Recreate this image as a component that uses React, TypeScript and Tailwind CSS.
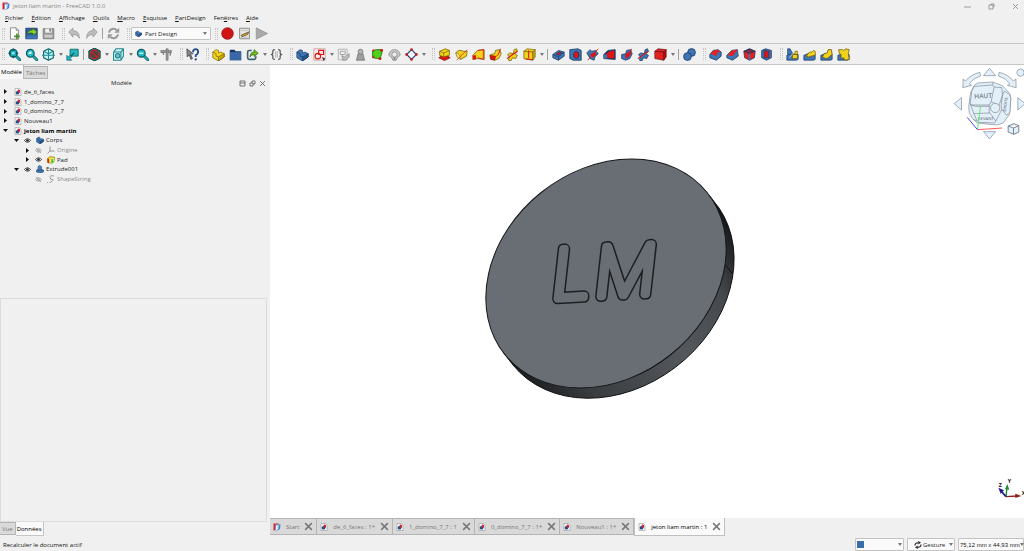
import type { ReactNode } from 'react'

const TEAL = '#22b8c0'
const TEAL_DARK = '#0c5c63'
const YEL = '#f2d21c'
const YEL_DARK = '#6d5a00'
const BLUE = '#3f74b5'
const BLUE_DARK = '#16375f'
const RED = '#dc1616'

const cube = (fill: string, side: string, line: string) => (
  <g stroke={line} strokeWidth="0.8" strokeLinejoin="round">
    <path d="M1 4l4-3 10 1-3 3z" fill={fill} />
    <path d="M1 4l11 1v10L1 13z" fill={fill} />
    <path d="M15 2v9l-3 4V5z" fill={side} />
  </g>
)

const bracket = (fill: string, side: string, line: string) => (
  <g stroke={line} strokeWidth="0.8" strokeLinejoin="round">
    <path d="M1 5l4-3 3 1v3l3-1 4 2v4l-7 5-7-4z" fill={fill} />
    <path d="M15 7v4l-7 5v-5z" fill={side} />
    <path d="M1 5l4 2v3l3 1" fill="none" />
  </g>
)

const magnifier = (
  <>
    <path d="M9 9l5.500 5.500" stroke={TEAL_DARK} strokeWidth="3.600" strokeLinecap="round" />
    <path d="M9 9l5.500 5.500" stroke={TEAL} strokeWidth="1.800" strokeLinecap="round" />
    <circle cx="6.500" cy="6.500" r="4.800" fill={TEAL} stroke={TEAL_DARK} strokeWidth="1.400" />
  </>
)

const sweep = (fill: string, line: string) => (
  <>
    <path d="M2 8l5-1 1-4 5-1 2 5-3 6-5 2-5-2z" fill={fill} stroke={line} strokeWidth="0.9" />
    <path d="M1 9l7 1-1 5-5-1z" fill={RED} stroke="#700" strokeWidth="0.6" />
    <path d="M6 12Q12 10 14 1" fill="none" stroke={RED} strokeWidth="1.200" />
  </>
)

const helix = (fill: string, line: string) => (
  <>
    <path d="M3 15l1-4-2-3 3-2 4 1 1-5 3-1 1 3-3 3 3 2-2 4-4-1-2 4z" fill={fill} stroke={line} strokeWidth="0.9" />
    <path d="M1 13L14 4" stroke={RED} strokeWidth="1.300" />
  </>
)

const bool = (extra: ReactNode) => (
  <>
    <path d="M1 9l5-2 9 1v6l-2 1H1z" fill={BLUE} stroke={BLUE_DARK} strokeWidth="0.8" />
    {extra}
  </>
)

const icons = {
  newDoc: (
    <>
      <path d="M3 1h7l3 3v11H3z" fill="#fff" stroke="#777" />
      <path d="M10 1v3h3" fill="#ddd" stroke="#777" />
      <path d="M11 8v7M7.500 11.500h7" stroke="#4b8a2b" strokeWidth="2" />
    </>
  ),
  open: (
    <>
      <path d="M1 1.500h14v13H1z" fill="#2d5f9e" stroke={BLUE_DARK} />
      <path d="M3 9Q4 3 9 4V1.500L15 6l-5 4.500V8Q6 6 3 9z" fill="#8bd12a" stroke="#265e0a" strokeWidth="0.7" />
      <path d="M1 14.500l2-4h12v4z" fill={BLUE} />
    </>
  ),
  save: (
    <>
      <path d="M1.500 2h13v12.500h-13z" fill="#999" stroke="#777" />
      <path d="M4 2h8v5H4z" fill="#eee" />
      <path d="M9 2.500h2v3H9z" fill="#777" />
      <path d="M3 9.500h10V13H3z" fill="#ccc" />
    </>
  ),
  undo: <path d="M1 6l5-4.500v3Q14 4 14 14q-2-5-8-4.500v3z" fill="#bdbdbd" stroke="#8c8c8c" strokeWidth="0.8" />,
  redo: <path d="M15 6l-5-4.500v3Q2 4 2 14q2-5 8-4.500v3z" fill="#bdbdbd" stroke="#8c8c8c" strokeWidth="0.8" />,
  refresh: (
    <g fill="none" stroke="#999" strokeWidth="2.400">
      <path d="M2.500 7A5.500 5.500 0 0 1 12 4" />
      <path d="M13.500 9A5.500 5.500 0 0 1 4 12" />
      <path d="M15 1v6H9zM1 15V9h6z" fill="#999" stroke="none" />
    </g>
  ),
  record: <circle cx="8" cy="8" r="7.200" fill="#d01414" stroke="#8c0a0a" strokeWidth="0.8" />,
  editMacro: (
    <>
      <path d="M2 1.500h12v13H2z" fill="#e4e6df" stroke="#777" />
      <path d="M4 4h8M4 12.500h8" stroke="#bbb" />
      <path d="M4 10l7-3 2-1-1 3-7 3z" fill="#e6a817" stroke="#333" strokeWidth="0.8" />
    </>
  ),
  play: <path d="M1.500 1l14 7-14 7z" fill="#a9a9a9" stroke="#8a8a8a" strokeWidth="0.8" />,
  fitAll: (
    <>
      {magnifier}
      <path d="M6.500 0l2.500 3.500H4zM6.500 13L9 9.500H4zM0 6.500L3.500 4v5zM13 6.500L9.500 4v5z" fill={TEAL_DARK} />
      <path d="M5 6.500h3" stroke="#baf3f5" strokeWidth="2" />
    </>
  ),
  fitSel: (
    <>
      {magnifier}
      <path d="M4 8l1-3 3-1v3z" fill="#d9fbfc" />
    </>
  ),
  iso: (
    <g fill="#c9f3f4" stroke={TEAL_DARK} strokeWidth="1.300" strokeLinejoin="round">
      <path d="M8 1l6 3v8l-6 3-6-3V4z" />
      <path d="M2 4l6 3 6-3M8 1v14M0 9h16" fill="none" stroke="#168c94" />
    </g>
  ),
  align: (
    <>
      <path d="M5 1.500h10V10H5z" fill={TEAL} stroke={TEAL_DARK} />
      <path d="M3 13l7-7" stroke={TEAL_DARK} strokeWidth="1.600" />
      <path d="M1 9v6h6l-2-2 2-2-2-2-2 2z" fill={TEAL} stroke={TEAL_DARK} strokeWidth="0.8" />
    </>
  ),
  drawStyle: (
    <>
      <path d="M8 0l7 3.500v9L8 16l-7-3.500v-9z" fill="#1c7c82" stroke="#063236" />
      <circle cx="8" cy="8" r="5.200" fill="#3e4a4c" stroke="#c4201c" strokeWidth="2" />
      <path d="M4 4l8 8" stroke="#c4201c" strokeWidth="2" />
    </>
  ),
  bbox: (
    <g fill="none" stroke="#17868d" strokeWidth="1.300" strokeLinejoin="round">
      <path d="M2 5h9v10H2zM2 5l3-4h9v9l-3 5M11 5l3-4" fill="#d9f5f5" />
      <circle cx="7" cy="9.500" r="2.800" fill="#7bc" />
    </g>
  ),
  zoom: (
    <>
      {magnifier}
      <path d="M4 6.500h5" stroke="#d9fbfc" strokeWidth="1.600" />
    </>
  ),
  measure: (
    <g fill="#999" stroke="#666" strokeWidth="0.7">
      <path d="M1 3h13v2.500H1z" />
      <path d="M7.500 1h2.500v14H7.500zM3 5.500h1.500v3zM12 5.500h1.500l-1 4z" />
    </g>
  ),
  whatsThis: (
    <>
      <path d="M1 1l8 6-3.500.5L8 13l-2 1-2-5.500L1.500 11z" fill="#888" stroke="#333" strokeWidth="0.8" />
      <path d="M8.500 5Q9 1.500 12 1.500T15 5q0 2-3 4v2" fill="none" stroke="#224a86" strokeWidth="2.200" />
      <circle cx="12" cy="14" r="1.400" fill="#224a86" />
    </>
  ),
  part: bracket(YEL, '#c9a800', YEL_DARK),
  group: (
    <>
      <path d="M1 2h6l1 2h7v11H1z" fill={BLUE_DARK} />
      <path d="M1 5h14v10H1z" fill="#3868a8" />
    </>
  ),
  link: (
    <>
      <path d="M7 3H4Q2 3 2 5v7q0 2 2 2h6q2 0 2-2v-2" fill="none" stroke="#3e6172" strokeWidth="2" />
      <path d="M5 11Q5 5 10 5V2l5 4.500-5 4V8Q7 8 5 11z" fill="#6fc022" stroke="#264f0a" strokeWidth="0.8" />
    </>
  ),
  braces: (
    <g fill="none" stroke="#555" strokeWidth="1.500">
      <path d="M6 2Q3 2 3.500 5T1 8q3 0 2.500 3T6 14M10 2q3 0 2.500 3T15 8q-3 0-2.500 3T10 14" />
      <path d="M7 4v8M9 4v8" stroke="#888" strokeWidth="0.7" />
    </g>
  ),
  body: bracket(BLUE, '#28548d', BLUE_DARK),
  sketch: (
    <>
      <path d="M1 1h14v14H1z" fill="#f6eaea" stroke="#c99" />
      <path d="M7 3h6v5H7z" fill="none" stroke={RED} strokeWidth="1.400" />
      <circle cx="6" cy="10" r="3.400" fill="none" stroke={RED} strokeWidth="1.400" />
      <path d="M11 11l4 2-2 3z" fill="#333" />
    </>
  ),
  editSketch: (
    <>
      <path d="M1.500 1.500h11v13h-11z" fill="#ededed" stroke="#aaa" />
      <path d="M4 4h6v4H4z" fill="none" stroke="#999" />
      <path d="M6 9l3 2 6-4v4l-4 4H7z" fill="#bbb" stroke="#888" strokeWidth="0.8" />
    </>
  ),
  mapSketch: (
    <>
      <path d="M3 15l2-8h6l2 8z" fill="#9d9d9d" stroke="#777" />
      <circle cx="8" cy="4.500" r="3" fill="#b5b5b5" stroke="#777" />
    </>
  ),
  validate: (
    <>
      <path d="M2 3l5-1 7 0-1 6-1 2 0 4-4-1-6-1z" fill="#4ed01c" stroke="#1c6406" />
      <circle cx="13" cy="3" r="1.700" fill={RED} />
      <circle cx="3" cy="3" r="1.200" fill={RED} />
      <circle cx="11" cy="13" r="1.700" fill={RED} />
      <circle cx="3" cy="11" r="1.200" fill={RED} />
    </>
  ),
  checkGeo: (
    <>
      <path d="M1 9a7 7 0 1 1 14 0l-3 2-2 4H6l-2-4z" fill="#c9c9c9" stroke="#8a8a8a" />
      <circle cx="8" cy="8" r="3.200" fill="#eee" stroke="#8a8a8a" />
      <path d="M7 11h2v4H7z" fill="#888" />
    </>
  ),
  shapeBinder: (
    <>
      <path d="M8 2l6 6-6 6-6-6z" fill="#f4f6ff" stroke="#27467c" strokeWidth="1.500" />
      {[[8, 2], [14, 8], [8, 14], [2, 8]].map(([x, y]) => (
        <circle key={`${x}-${y}`} cx={x} cy={y} r="1.700" fill="#c3202a" />
      ))}
    </>
  ),
  pad: (
    <>
      <path d="M1 12l4-3h6l4 3-7 3.500z" fill={RED} stroke="#700" strokeWidth="0.8" />
      <path d="M2 4l7-3 5 2v6l-7 2-5-2z" fill={YEL} stroke={YEL_DARK} strokeWidth="0.9" />
      <path d="M2 4l5 2 7-3M7 6v5" fill="none" stroke={YEL_DARK} strokeWidth="0.8" />
    </>
  ),
  revolution: (
    <>
      <path d="M1 6Q5 1 10 4l5 0-1 6-7 4Q2 12 1 6z" fill={YEL} stroke={YEL_DARK} strokeWidth="0.9" />
      <path d="M1 6q5 0 6 8-5-1-6-8z" fill="#f8e66a" stroke={YEL_DARK} strokeWidth="0.6" />
      <path d="M2 15L15 2" stroke={RED} strokeWidth="0.9" />
    </>
  ),
  loft: (
    <>
      <path d="M1 9l6-6 8-1v12l-8-1-6 1z" fill={YEL} stroke={YEL_DARK} strokeWidth="0.9" />
      <path d="M7 3l7-1v12l-7-2" fill="none" stroke={RED} strokeWidth="1" />
      <path d="M1 9l4 0v5l-4 0z" fill={RED} />
    </>
  ),
  pipe: sweep(YEL, YEL_DARK),
  helix: helix(YEL, YEL_DARK),
  primitive: (
    <>
      {cube(YEL, '#c9a800', YEL_DARK)}
      <path d="M7 3v10M3 13.500l9 1" stroke={RED} strokeWidth="1.300" />
    </>
  ),
  pocket: (
    <>
      <path d="M1 8l7-5 7 2v5l-7 5-7-3z" fill={BLUE} stroke={BLUE_DARK} strokeWidth="0.9" />
      <path d="M5 7.500l4-2.500 3 1-4 3z" fill={RED} stroke={BLUE_DARK} strokeWidth="0.8" />
      <path d="M1 8l7 3v4M8 11l7-6" fill="none" stroke={BLUE_DARK} strokeWidth="0.8" />
    </>
  ),
  hole: (
    <>
      <path d="M1 2l10-1 4 2v12H5l-4-2z" fill={BLUE} stroke={BLUE_DARK} />
      <ellipse cx="9" cy="8.500" rx="3.400" ry="4.200" fill={RED} stroke={BLUE_DARK} />
    </>
  ),
  groove: (
    <>
      <path d="M1 6l4-4 2 2 5-1 3 4-4 4-1 4-5-2z" fill={BLUE} stroke={BLUE_DARK} strokeWidth="0.9" />
      <path d="M5 8l6-3 2 3-5 4z" fill={RED} />
      <path d="M2 15L15 1" stroke={RED} strokeWidth="1.100" />
    </>
  ),
  subLoft: (
    <>
      <path d="M1 8l5-5 9-1v12L1 13z" fill={BLUE_DARK} stroke={BLUE_DARK} />
      <path d="M4 7l4-3 6-1v10L4 12z" fill={RED} />
      <path d="M1 8l4 0v5l-4 0z" fill={BLUE} />
    </>
  ),
  subPipe: (
    <>
      <path d="M2 8l5-1 1-4 5-1 2 5-3 6-5 2-5-2z" fill={BLUE} stroke={BLUE_DARK} strokeWidth="0.9" />
      <path d="M6 9l5-5 3 3-5 6z" fill={RED} />
      <path d="M6 12Q12 10 14 1" fill="none" stroke={RED} strokeWidth="1.200" />
    </>
  ),
  subHelix: helix(BLUE, BLUE_DARK),
  subPrimitive: cube('#e52020', '#b80d0d', '#5c0b12'),
  boolean: (
    <g fill={BLUE} stroke={BLUE_DARK} strokeWidth="0.9">
      <circle cx="10.500" cy="5.500" r="4.800" />
      <circle cx="5.500" cy="10.500" r="4.800" />
    </g>
  ),
  fillet: (
    <>
      <path d="M1 8l4-5 6-1 4 3v5l-6 5-8-3z" fill={BLUE} stroke={BLUE_DARK} strokeWidth="0.9" />
      <path d="M2 7l4-4 5-1 3 3q-5 0-5 5z" fill="#e52020" />
    </>
  ),
  chamfer: (
    <>
      <path d="M1 9l6-6 7-1 1 8-7 5-7-3z" fill={BLUE} stroke={BLUE_DARK} strokeWidth="0.9" />
      <path d="M2 9l5-6 7-1-6 8z" fill="#e52020" />
    </>
  ),
  draft: (
    <>
      <path d="M1 4l7-3 7 3-1 8-6 3-6-3z" fill="#e52020" stroke={BLUE_DARK} strokeWidth="0.9" />
      <path d="M1 4l7-3 7 3-7 3z" fill="#7a2b45" stroke={BLUE_DARK} strokeWidth="0.8" />
      <path d="M8 7v8" stroke={BLUE} strokeWidth="2" />
    </>
  ),
  thickness: (
    <>
      <path d="M2 3l5-2 7 2v9l-6 3-6-3z" fill={BLUE} stroke={BLUE_DARK} strokeWidth="0.9" />
      <path d="M5 3l6 1v8H5z" fill={RED} stroke={BLUE_DARK} strokeWidth="0.8" />
    </>
  ),
  mirrored: bool(
    <>
      <path d="M2 1h3l4 7H2z" fill={BLUE} stroke={BLUE_DARK} strokeWidth="0.8" />
      <path d="M8 8h6v5H8zM11 4h3v4h-3z" fill={YEL} stroke={YEL_DARK} strokeWidth="0.8" />
      <path d="M4 12l6-7" stroke="#ddd" />
    </>,
  ),
  linear: bool(<path d="M4 10l4-5 3 0 2-2 2 1v5l-5 1-3 1z" fill={YEL} stroke={YEL_DARK} strokeWidth="0.9" />),
  polar: bool(
    <path d="M3 11l2-4 4-1 1-4 4 0 1 6-3 2-1 2-4 1-2-1z" fill={YEL} stroke={YEL_DARK} strokeWidth="1" />,
  ),
  multi: bool(
    <path d="M2 2h5l1 1 3-2 4 1-1 5 1 7-5 1-2-3-3 1V8L3 7z" fill={YEL} stroke={YEL_DARK} strokeWidth="0.9" />,
  ),
  app: (
    <>
      <path d="M1 1h10l2 2H5v10l-2 2H1z" fill="#e4212b" />
      <path d="M5 3h10l-1 9-5 3H5z" fill="#3b86d8" />
      <path d="M6 5h6v2H9v2h2v2H9v3H6z" fill="#fff" />
    </>
  ),
  doc: (
    <>
      <path d="M2 1h9l3 3v11H2z" fill="#f4f4f4" stroke="#888" />
      <circle cx="7" cy="9.500" r="3.700" fill="#25508e" />
      <path d="M8 3l4 1v5l-2 1-3-4z" fill="#cf2630" />
    </>
  ),
  eye: (
    <>
      <path d="M1 8q7-8 14 0-7 8-14 0z" fill="#fff" stroke="#222" strokeWidth="1.800" />
      <circle cx="8" cy="8" r="3" fill="#222" />
    </>
  ),
  eyeOff: (
    <g stroke="#999" fill="none" strokeWidth="1.600">
      <path d="M1 8q7-8 14 0-7 8-14 0zM2 2l12 12" />
      <circle cx="8" cy="8" r="2.500" />
    </g>
  ),
  origin: <path d="M6 1v9l9 0M6 10l-5 5" fill="none" stroke="#888" strokeWidth="1.700" />,
  padItem: (
    <>
      <path d="M1 5l5-4 9 1v9l-6 4-8-2z" fill={YEL} stroke={YEL_DARK} strokeWidth="0.9" />
      <path d="M1 5l3 1v8l-3-1z" fill={RED} />
      <path d="M8 5h5v5h3l-5 6-5-6h2z" fill="#58c322" stroke="#fff" />
    </>
  ),
  extrude: (
    <>
      <path d="M1 10l5-2 9 2v4l-6 2-8-2z" fill={BLUE} stroke={BLUE_DARK} />
      <path d="M4 3l3-2 4 2v7H4z" fill="#4b83c4" stroke={BLUE_DARK} />
    </>
  ),
  shapeString: <path d="M14 2Q5 0 6 5t5 4-3 5-7 0" fill="none" stroke="#999" strokeWidth="2" />,
  close: <path d="M2 2l12 12M14 2L2 14" stroke="#777" strokeWidth="2.600" />,
  orbit: (
    <g fill="none" stroke="#2b2b2b" strokeWidth="2.400">
      <path d="M2 9Q2 3 9 4M14 7q0 6-7 5" />
      <path d="M8 0l6 3-5 4zM8 16l-6-3 5-4z" fill="#2b2b2b" stroke="none" />
    </g>
  ),
}

type IconName = keyof typeof icons

function Icon({ name, className = 'size-[13px]' }: { name: IconName; className?: string }) {
  return (
    <svg viewBox="0 0 16 16" className={`shrink-0 ${className}`} aria-hidden="true">
      {icons[name]}
    </svg>
  )
}

function Tool({ name, menu }: { name: IconName; menu?: boolean }) {
  return (
    <>
      <button type="button" aria-label={name} className="flex w-[17px] shrink-0 justify-center">
        <Icon name={name} />
      </button>
      {menu && (
        <button type="button" aria-label={`${name} menu`} className="flex w-[7px] shrink-0 justify-center">
          <Caret />
        </button>
      )}
    </>
  )
}

function Caret() {
  return (
    <svg viewBox="0 0 4 3" className="h-[3px] w-1 shrink-0" aria-hidden="true">
      <path d="M0 0h4L2 3z" fill="#777" />
    </svg>
  )
}

function Grip() {
  return <div className="mr-px ml-[5px] h-3 w-[3px] shrink-0 border-x border-dotted border-[#c4c4c4] first:ml-[2px]" />
}

function Sep() {
  return <div className="mx-[2px] h-[11px] w-px shrink-0 bg-[#a0a0a0]" />
}

// '|' separator, ':' toolbar handle, '+' suffix for a drop-down
const mainTools =
  ': fitAll fitSel iso+ align | drawStyle+ bbox+ zoom+ measure : whatsThis : part group link+ braces : body sketch+ editSketch mapSketch validate checkGeo shapeBinder+ : pad revolution loft pipe helix primitive+ | pocket hole groove subLoft subPipe subHelix subPrimitive+ | boolean : fillet chamfer draft thickness : mirrored linear polar multi'

const fileTools = ': newDoc open save : undo redo | refresh'
const macroTools = ': record editMacro play'

function Tools({ list }: { list: string }) {
  return list.split(' ').map((t, i) => {
    if (t === ':') return <Grip key={i} />
    if (t === '|') return <Sep key={i} />
    return <Tool key={i} name={t.replace('+', '') as IconName} menu={t.endsWith('+')} />
  })
}

const menus = [
  ['', 'F', 'ichier'],
  ['', 'É', 'dition'],
  ['', 'A', 'ffichage'],
  ['', 'O', 'utils'],
  ['', 'M', 'acro'],
  ['', 'E', 'squisse'],
  ['', 'P', 'artDesign'],
  ['Fen', 'ê', 'tres'],
  ['', 'A', 'ide'],
]

type Node = { label: string; icon: IconName; level: 0 | 1 | 2; open?: boolean; leaf?: boolean; hidden?: boolean }

const tree: Node[] = [
  { label: 'de_6_faces', icon: 'doc', level: 0 },
  { label: '1_domino_7_7', icon: 'doc', level: 0 },
  { label: '0_domino_7_7', icon: 'doc', level: 0 },
  { label: 'Nouveau1', icon: 'doc', level: 0 },
  { label: 'jeton liam martin', icon: 'doc', level: 0, open: true },
  { label: 'Corps', icon: 'body', level: 1, open: true },
  { label: 'Origine', icon: 'origin', level: 2, hidden: true },
  { label: 'Pad', icon: 'padItem', level: 2 },
  { label: 'Extrude001', icon: 'extrude', level: 1, open: true },
  { label: 'ShapeString', icon: 'shapeString', level: 2, leaf: true, hidden: true },
]

const indent = { 0: 'pl-0', 1: 'pl-[11px]', 2: 'pl-[22px]' }

function TreeRow({ node }: { node: Node }) {
  return (
    <li className={`flex items-center ${indent[node.level]} ${node.hidden ? 'text-[#8c8c8c]' : ''}`}>
      <span className="flex w-[11px] justify-center">
        {!node.leaf && (
          <svg viewBox="0 0 5 5" className="size-[5px]" aria-hidden="true">
            <path d={node.open ? 'M0 1h5L2.500 4z' : 'M1 0v5L4 2.500z'} fill="#111" />
          </svg>
        )}
      </span>
      {node.level > 0 && (
        <span className="flex w-[11px] justify-center">
          <Icon name={node.hidden ? 'eyeOff' : 'eye'} className="size-[7px]" />
        </span>
      )}
      <span className="flex w-[13px] justify-center">
        <Icon name={node.icon} className="size-2" />
      </span>
      <span className={node.level === 0 && node.open ? 'font-bold text-black' : ''}>{node.label}</span>
    </li>
  )
}

const docs = ['Start', 'de_6_faces : 1*', '1_domino_7_7 : 1', '0_domino_7_7 : 1*', 'Nouveau1 : 1*', 'jeton liam martin : 1']

function Coin() {
  const face = { rx: 129.6, ry: 103.8 }
  const letters = { x: '0 43', y: '0 0', fontSize: 68 }
  return (
    <svg viewBox="0 0 754 453" preserveAspectRatio="xMidYMid meet" className="size-full" role="img" aria-label="jeton">
      <defs>
        <linearGradient id="rim" gradientUnits="userSpaceOnUse" x1="240" y1="300" x2="447" y2="138">
          <stop offset="0" stopColor="#1a1c1e" />
          <stop offset="0.180" stopColor="#3a3d40" />
          <stop offset="0.550" stopColor="#54585c" />
          <stop offset="0.800" stopColor="#45484c" />
          <stop offset="1" stopColor="#131415" />
        </linearGradient>
      </defs>
      <path
        d="M439 130L449 143A129.600 103.800 -38.700 0 1 243 300L233 287z"
        fill="url(#rim)"
        stroke="#111"
        strokeWidth="1"
      />
      <ellipse cx="336" cy="208.500" {...face} transform="rotate(-38.700 336 208.500)" fill="#696e75" stroke="#141517" />
      <path d="M455.500 200l7 9" stroke="#111" />
      <g
        transform="translate(283 234) rotate(-3)"
        fontFamily="Inter, Open Sans, sans-serif"
        fontStyle="italic"
        fontWeight="100"
        strokeLinejoin="round"
      >
        <text {...letters} fill="#1b1d1f" stroke="#1b1d1f" strokeWidth="11">LM</text>
        <text {...letters} fill="#696e75" stroke="#696e75" strokeWidth="8" aria-hidden="true">LM</text>
      </g>
    </svg>
  )
}

function NavCube() {
  return (
    <svg viewBox="10 8 212 222" className="absolute top-[2px] right-0 h-[74px] w-[71px]" aria-hidden="true">
      <g fill="#e3f0fa" stroke="#7d8894" strokeWidth="2" strokeLinejoin="round">
        <path d="M119 12l18 22h-36zM119 224l18-22h-36zM13 118l22-18v37zM226 118l-22-18v37z" />
        <path d="M90 24Q64 30 47 50l-7-6-1 26 26-7-7-5q12-17 34-23z" />
        <path d="M148 24q26 6 43 26l7-6 1 26-26-7 7-5q-12-17-34-23z" />
        <circle cx="212" cy="25" r="11" />
        <path d="M175 185l17-7 15 6v19l-15 7-17-7zM175 185l16 6 16-7M191 191v19" strokeWidth="3" />
        <path d="M74 62l10-6 44-3 30 11 22 24 3 14-4 48-19 26-20 6-58-6-12-11-12-20-1-20 5-40z" />
        <path d="M73 66l55-4 5 6-9 44-6 10H64l-3-5 5-37z" />
        <path d="M72 148l46-2 6 4 14 20-4 6-46-2-6-4z" />
        <path d="M158 92l6-12 16 12 3 10-3 43-10 8-14-18-2-10z" />
        <path d="M133 68l23 2 2 22-10 30M128 62l2-9M124 112l24 12M61 117l11 31M118 122v24M64 122l14 4h40M138 170l18-35M82 170l-12-5" fill="none" />
        <circle cx="136" cy="131" r="14" />
      </g>
      <g fill="#76828e" fontFamily="Open Sans, sans-serif" fontWeight="600">
        <text x="73" y="103" fontSize="20" transform="rotate(-3 73 103)">HAUT</text>
        <text x="84" y="167" fontSize="12">DEVANT</text>
        <text x="168" y="142" fontSize="12" transform="rotate(-82 168 142)">DROITE</text>
      </g>
      <path d="M83 196l74-5" stroke="#ff5c5c" strokeWidth="3" />
      <path d="M83 196l9-70" stroke="#5cf06c" strokeWidth="3" />
      <path d="M83 196l-31-37" stroke="#4a4af2" strokeWidth="3" />
    </svg>
  )
}

function AxisCross() {
  return (
    <svg viewBox="468 8 84 63" className="absolute right-0 bottom-[19px] h-[21px] w-[28px]" aria-hidden="true">
      <path d="M498 64l34-2" stroke="#8c1d1d" strokeWidth="4" />
      <path d="M526 55l18 7-18 6z" fill="#8c1d1d" />
      <path d="M498 64l3-28" stroke="#1f8c2a" strokeWidth="4" />
      <path d="M495 42l7-16 6 17z" fill="#1f8c2a" />
      <path d="M498 64l-14-16" stroke="#1d1d8c" strokeWidth="5" />
      <path d="M475 37l17 8-10 10z" fill="#1d1d8c" />
      <g fill="#111" fontFamily="Open Sans, sans-serif" fontSize="16" fontWeight="700">
        <text x="476" y="34">Z</text>
        <text x="503" y="22">Y</text>
        <text x="545" y="60">X</text>
      </g>
    </svg>
  )
}

function StatusSelect({ label, value, className }: { label: string; value: string; className: string }) {
  return (
    <select
      aria-label={label}
      className={`h-full w-full appearance-none rounded-[1px] border border-[#c3c3c3] bg-[#fafafa] ${className}`}
    >
      <option>{value}</option>
    </select>
  )
}

export default function App() {
  return (
    <div className="flex h-screen flex-col overflow-hidden bg-[#f0f0f0] font-['Open_Sans','Noto_Sans',sans-serif] text-[6px] leading-[8px] text-[#222]">
      <header className="flex h-3 items-center justify-between pl-[2px] text-[#858585]">
        <div className="flex items-center gap-[3px]">
          <Icon name="app" className="size-2" />
          <span>jeton liam martin - FreeCAD 1.0.0</span>
        </div>
        <div className="flex items-center gap-[17px] pr-[5px]">
          {['M0 4h7', 'M1 2h4v4H1zM3 2V1h3v3H5', 'M1 1l5 5M6 1L1 6'].map((d, i) => (
            <button key={d} type="button" aria-label={['Réduire', 'Restaurer', 'Fermer'][i]}>
              <svg viewBox="0 0 7 7" className="size-[7px]" fill="none" stroke="#888" strokeWidth="0.8">
                <path d={d} />
              </svg>
            </button>
          ))}
        </div>
      </header>

      <nav className="flex h-3 items-center gap-2 pl-[5px] text-[#111]">
        {menus.map(([before, key, after]) => (
          <button key={key + after} type="button">
            {before}
            <span className="underline">{key}</span>
            {after}
          </button>
        ))}
      </nav>

      <div className="flex h-5 items-center border-b border-[#c6c6c6]">
        <Tools list={fileTools} />
        <Grip />
        <div className="relative h-[13px] w-20">
          <StatusSelect label="Atelier" value="Part Design" className="pl-[13px]" />
          <div className="pointer-events-none absolute inset-0 flex items-center justify-between px-1">
            <Icon name="body" className="size-[7px]" />
            <Caret />
          </div>
        </div>
        <div className="flex items-center pl-[2px]">
          <Tools list={macroTools} />
        </div>
      </div>

      <div className="flex h-[21px] items-center border-b border-[#c6c6c6]">
        <Tools list={mainTools} />
      </div>

      <main className="flex min-h-0 flex-1">
        <aside className="flex w-[270px] shrink-0 flex-col pr-[3px]">
          <div className="flex items-start">
            <button type="button" className="h-[14px] border-r border-[#bbb] bg-[#f8f8f8] px-px text-black">Modèle</button>
            <button type="button" className="mt-px h-[13px] border border-l-0 border-[#b5b5b5] bg-[#dadada] px-[2px] text-[#777]">
              Tâches
            </button>
          </div>
          <div className="flex h-2 items-center">
            <h2 className="flex-1 pl-1 text-center">Modèle</h2>
            <div className="flex gap-[3px] pr-px">
              {['M1 1h5v5H1zM1 3h5', 'M1 3h3v3H1zM3 3V1h3v3H4', 'M1 1l5 5M6 1L1 6'].map((d, i) => (
                <button key={d} type="button" aria-label={['Réduire', 'Détacher', 'Fermer'][i]}>
                  <svg viewBox="0 0 7 7" className="size-[7px]" fill="none" stroke="#555" strokeWidth="0.8">
                    <path d={d} />
                  </svg>
                </button>
              ))}
            </div>
          </div>
          <ul className="grid h-[97px] auto-rows-fr">
            {tree.map((node) => (
              <TreeRow key={node.label} node={node} />
            ))}
          </ul>
          <div className="mt-[114px] flex-1 border border-[#dcdcdc]" />
          <div className="flex h-[15px] items-start">
            <button type="button" className="h-[13px] border border-l-0 border-[#b5b5b5] bg-[#dadada] px-[2px] text-[#777]">Vue</button>
            <button type="button" className="h-[14px] border border-t-0 border-l-0 border-[#c6c6c6] bg-[#fafafa] px-px text-black">
              Données
            </button>
          </div>
        </aside>

        <section className="flex min-w-0 flex-1 flex-col">
          <div className="relative min-h-0 flex-1 bg-white">
            <Coin />
            <NavCube />
            <AxisCross />
          </div>
          <div className="flex h-[19px] items-start">
            {docs.map((label, i) => {
              const active = i === docs.length - 1
              return (
                <div
                  key={label}
                  className={
                    active
                      ? 'flex h-[18px] items-center border border-t-0 border-[#c0c0c0] bg-[#fafafa] px-[3px] text-black'
                      : 'flex h-[17px] items-center border border-l-0 border-[#b4b4b4] bg-[#d9d9d9] px-[3px] text-[#777]'
                  }
                >
                  <Icon name={i === 0 ? 'app' : 'doc'} className="size-2" />
                  <button type="button" className="pr-[5px] pl-[5px]">{label}</button>
                  <button type="button" aria-label={`Fermer ${label}`}>
                    <Icon name="close" className="size-[9px]" />
                  </button>
                </div>
              )
            })}
          </div>
        </section>
      </main>

      <footer className="flex h-[14px] items-end justify-between pl-[3px]">
        <span className="pb-[2px] text-[#111]">Recalculer le document actif</span>
        <div className="flex h-[13px] gap-[3px]">
          <div className="relative w-[49px]">
            <StatusSelect label="Couleur" value="" className="" />
            <div className="pointer-events-none absolute inset-0 flex items-center justify-between px-[2px]">
              <span className="size-[7px] bg-[#3a6ea8]" />
              <Caret />
            </div>
          </div>
          <div className="relative w-12">
            <StatusSelect label="Navigation" value="Gesture" className="pl-[15px]" />
            <div className="pointer-events-none absolute inset-0 flex items-center justify-between pr-[2px] pl-[7px]">
              <Icon name="orbit" className="size-2" />
              <Caret />
            </div>
          </div>
          <div className="relative w-[66px]">
            <StatusSelect
              label="Dimensions"
              value="75,12 mm x 44,93 mm"
              className="pl-px font-['Liberation_Sans',sans-serif]"
            />
            <div className="pointer-events-none absolute inset-0 flex items-center justify-end">
              <Caret />
            </div>
          </div>
        </div>
      </footer>
    </div>
  )
}
